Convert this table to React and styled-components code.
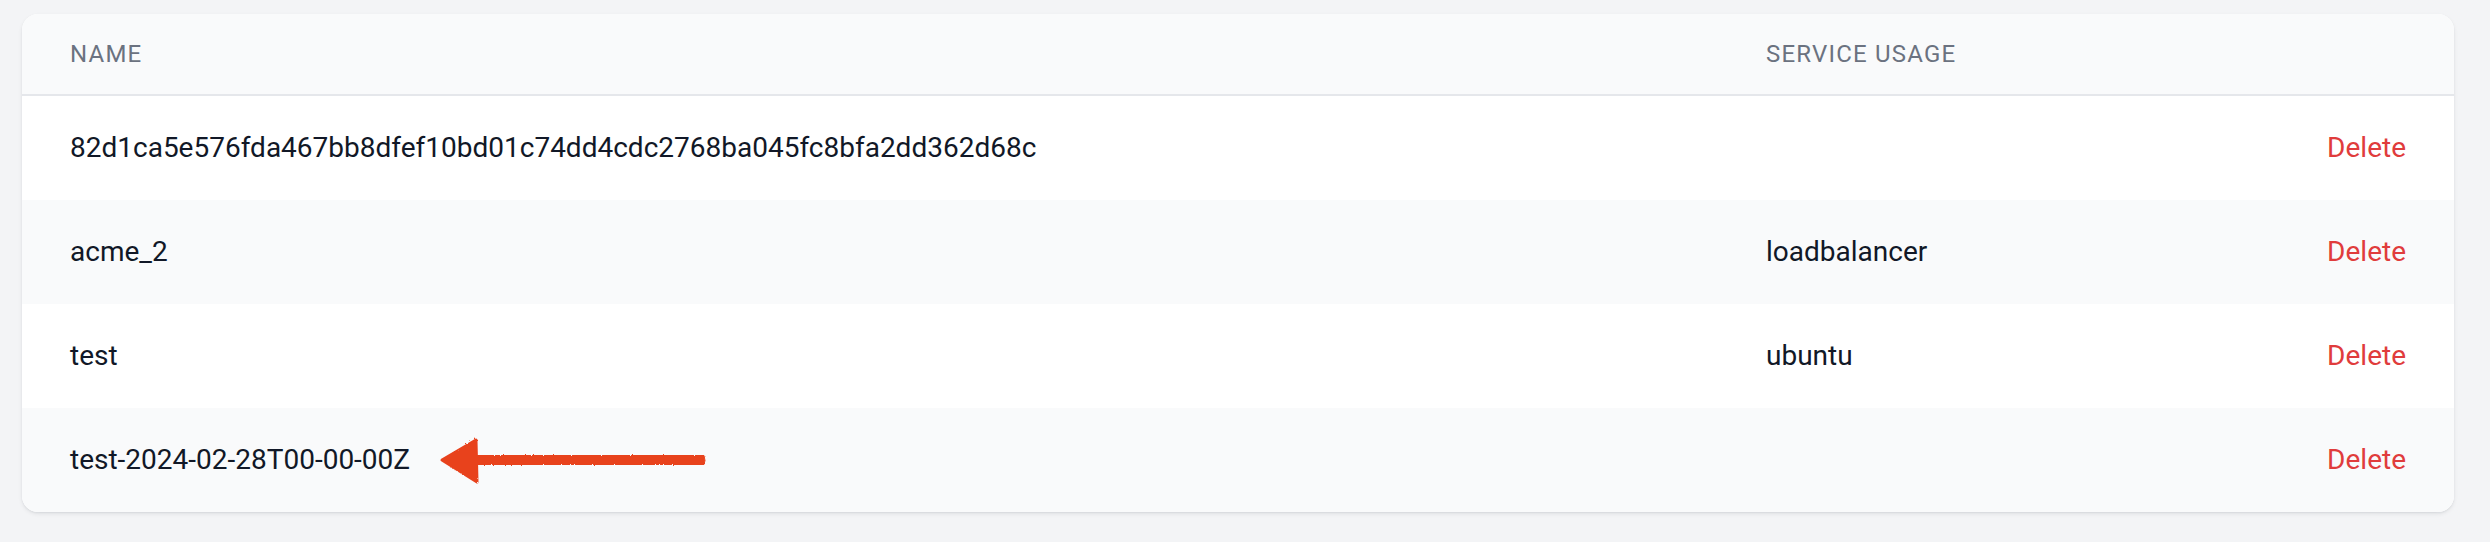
import styled, { createGlobalStyle } from "styled-components";

const GlobalStyle = createGlobalStyle`
    html, body {
        margin: 0;
        padding: 0;
        background: #f3f4f6;
    }

    body {
        font-family: Roboto, "Liberation Sans", Arial, sans-serif;
        -webkit-font-smoothing: antialiased;
    }
`;

const Page = styled.div`
    padding: 14px 36px 29px 22px;
    width: 2490px;
    box-sizing: border-box;
`;

const Card = styled.div`
    background: #ffffff;
    border-radius: 16px;
    overflow: hidden;
    box-shadow: 0 2px 4px rgba(17, 24, 39, 0.08), 0 1px 2px rgba(17, 24, 39, 0.06);
`;

const Row = styled.div`
    display: grid;
    grid-template-columns: 1696px 1fr auto;
    align-items: center;
    background: ${({ $striped }) => ($striped ? "#f9fafb" : "#ffffff")};
`;

const HeadRow = styled(Row)`
    background: #f9fafb;
    border-bottom: 2px solid #e5e7eb;
`;

const HeadCell = styled.div`
    padding: 24px 48px;
    font-size: 24px;
    line-height: 32px;
    letter-spacing: 1.2px;
    text-transform: uppercase;
    color: #6b7280;
    font-weight: 400;
`;

const Cell = styled.div`
    display: flex;
    align-items: center;
    gap: 28px;
    padding: 32px 48px;
    font-size: 28px;
    line-height: 40px;
    color: #111827;
    white-space: nowrap;
`;

const ActionCell = styled(Cell)`
    justify-content: flex-end;
`;

const DeleteLink = styled.a`
    color: #e03c3c;
    text-decoration: none;
    cursor: pointer;
`;

const Arrow = () => (
    <svg width="272" height="48" viewBox="0 0 272 48" style={{ flex: "none", margin: "-4px 0" }}>
        <defs>
            <filter id="chalk" x="-5%" y="-20%" width="110%" height="140%">
                <feTurbulence type="fractalNoise" baseFrequency="0.9" numOctaves="2" seed="3" />
                <feDisplacementMap in="SourceGraphic" scale="2.5" />
            </filter>
        </defs>
        <g filter="url(#chalk)" fill="#e8431f" stroke="#e8431f" strokeLinejoin="round">
            <path d="M 38 19.5 L 266 19.5 L 267 24.5 L 266 28.5 L 38 28.5 Z" strokeWidth="1" />
            <path d="M 4 24 L 38 4 L 39 46 Z" strokeWidth="3" />
        </g>
    </svg>
);

const keys = [
    { name: "82d1ca5e576fda467bb8dfef10bd01c74dd4cdc2768ba045fc8bfa2dd362d68c", usage: "" },
    { name: "acme_2", usage: "loadbalancer" },
    { name: "test", usage: "ubuntu" },
    { name: "test-2024-02-28T00-00-00Z", usage: "", marked: true },
];

export default function App() {
    return (
        <>
            <GlobalStyle />
            <Page>
                <Card>
                    <HeadRow>
                        <HeadCell>Name</HeadCell>
                        <HeadCell>Service usage</HeadCell>
                        <HeadCell />
                    </HeadRow>
                    {keys.map((key, i) => (
                        <Row key={key.name} $striped={i % 2 === 1}>
                            <Cell>
                                {key.name}
                                {key.marked && <Arrow />}
                            </Cell>
                            <Cell>{key.usage}</Cell>
                            <ActionCell>
                                <DeleteLink>Delete</DeleteLink>
                            </ActionCell>
                        </Row>
                    ))}
                </Card>
            </Page>
        </>
    );
}
